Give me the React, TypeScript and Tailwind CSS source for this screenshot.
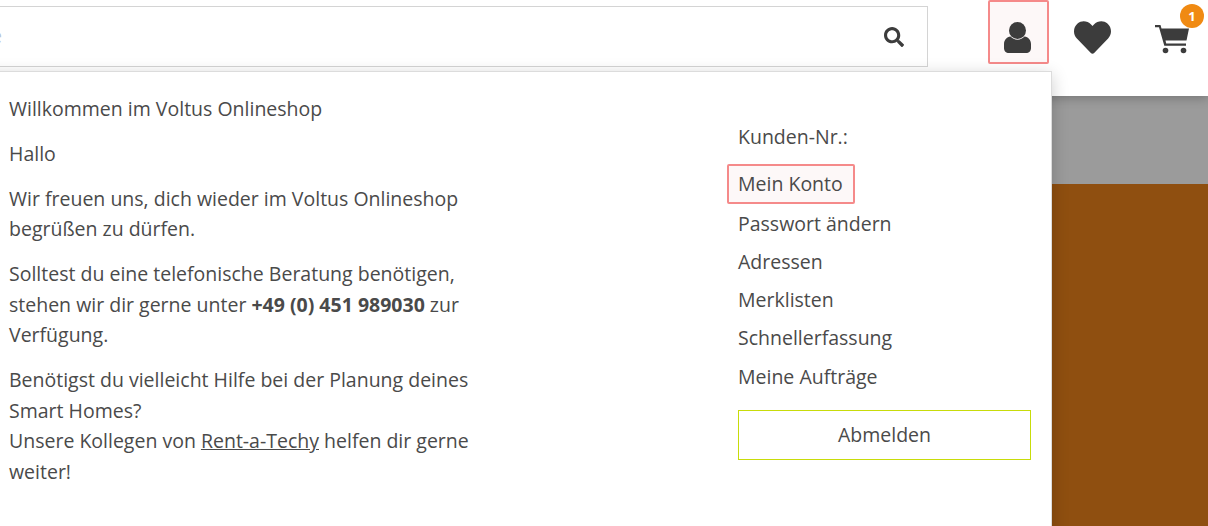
import { FaHeart, FaSearch } from 'react-icons/fa'

const links = ['Passwort ändern', 'Adressen', 'Merklisten', 'Schnellerfassung', 'Meine Aufträge']

export default function App() {
  return (
    <div className="relative h-[526px] w-[1208px] overflow-hidden bg-[#8f4f10] font-['Open_Sans',sans-serif] text-[19.5px] leading-[30.5px] text-[#4a4a4a]">
      {/* Header */}
      <header className="relative z-10 flex h-[96px] items-start bg-white shadow-[0_2px_10px_rgba(0,0,0,0.25)]">
        <div className="mt-[6px] ml-[-20px] flex h-[61px] w-[948px] items-center justify-between border border-[#d4d4d4] pr-[23px] pl-[10px] text-[#3c3c3c]">
          <span className="text-[#b9c4d6]">e</span>
          <FaSearch className="size-[20px]" />
        </div>
        <button className="ml-[60px] flex h-[64px] w-[61px] items-center justify-center rounded-[2px] border-2 border-[#f58a8a] bg-[#fdf8f8] pt-[10px] pr-[3px]">
          <svg width="27" height="31" viewBox="0 0 27 31" fill="#3c3c3c">
            <circle cx="13.5" cy="8.500" r="8.500" />
            <path d="M6.500 14.500c1.800 2 4.200 3.200 7 3.200s5.200-1.200 7-3.200c3.800.6 6.500 3.500 6.500 7.500v4c0 3-2 5-5 5H5c-3 0-5-2-5-5v-4c0-4 2.700-6.900 6.500-7.500z" />
          </svg>
        </button>
        <div className="mt-[19px] ml-[25px] text-[#3c3c3c]">
          <FaHeart className="size-[37px]" />
        </div>
        <div className="relative mt-[24px] ml-[44px]">
          <svg width="35" height="30" viewBox="0 0 35 30" fill="#3c3c3c">
            <path d="M0 1h5.500l1 3.500H34l-2.500 12H10.500l.7 3H31v2.200H9.300L4 3.200H0z" />
            <circle cx="10.500" cy="26.500" r="2.800" />
            <circle cx="28.500" cy="26.500" r="2.800" />
          </svg>
          <span className="absolute top-[-20px] left-[25px] flex size-[24px] items-center justify-center rounded-full bg-[#f08a12] text-[13px] leading-none font-bold text-white">
            1
          </span>
        </div>
      </header>

      <div className="h-[88px] bg-[#9b9b9b]" />

      {/* Account dropdown */}
      <div className="absolute top-[71px] left-[-20px] z-20 flex h-[480px] w-[1072px] border border-[#dcdcdc] bg-white shadow-[0_4px_16px_rgba(0,0,0,0.2)]">
        <div className="w-[505px] pt-[22px] pl-[28px]">
          <p>Willkommen im Voltus Onlineshop</p>
          <p className="mt-[14.500px]">Hallo</p>
          <p className="mt-[14px]">
            Wir freuen uns, dich wieder im Voltus Onlineshop
            <br />
            begrüßen zu dürfen.
          </p>
          <p className="mt-[14.500px]">
            Solltest du eine telefonische Beratung benötigen,
            <br />
            stehen wir dir gerne unter <strong className="font-bold">+49 (0) 451 989030</strong> zur
            <br />
            Verfügung.
          </p>
          <p className="mt-[14.500px]">
            Benötigst du vielleicht Hilfe bei der Planung deines
            <br />
            Smart Homes?
            <br />
            Unsere Kollegen von <span className="underline">Rent-a-Techy</span> helfen dir gerne
            <br />
            weiter!
          </p>
        </div>
        <div className="ml-[252px] w-[293px] pt-[50px]">
          <p>Kunden-Nr.:</p>
          <a className="mt-[11px] ml-[-11px] block h-[40px] w-[128px] rounded-[2px] border-2 border-[#f58a8a] bg-[#fdf8f8] px-[9px] leading-[36px]">
            Mein Konto
          </a>
          <ul className="mt-[1px]">
            {links.map((link) => (
              <li key={link} className="h-[38.300px] leading-[38.300px]">
                {link}
              </li>
            ))}
          </ul>
          <button className="mt-[14px] block h-[50px] w-[293px] border border-[#c8dc0a] text-center">
            Abmelden
          </button>
        </div>
      </div>
    </div>
  )
}
